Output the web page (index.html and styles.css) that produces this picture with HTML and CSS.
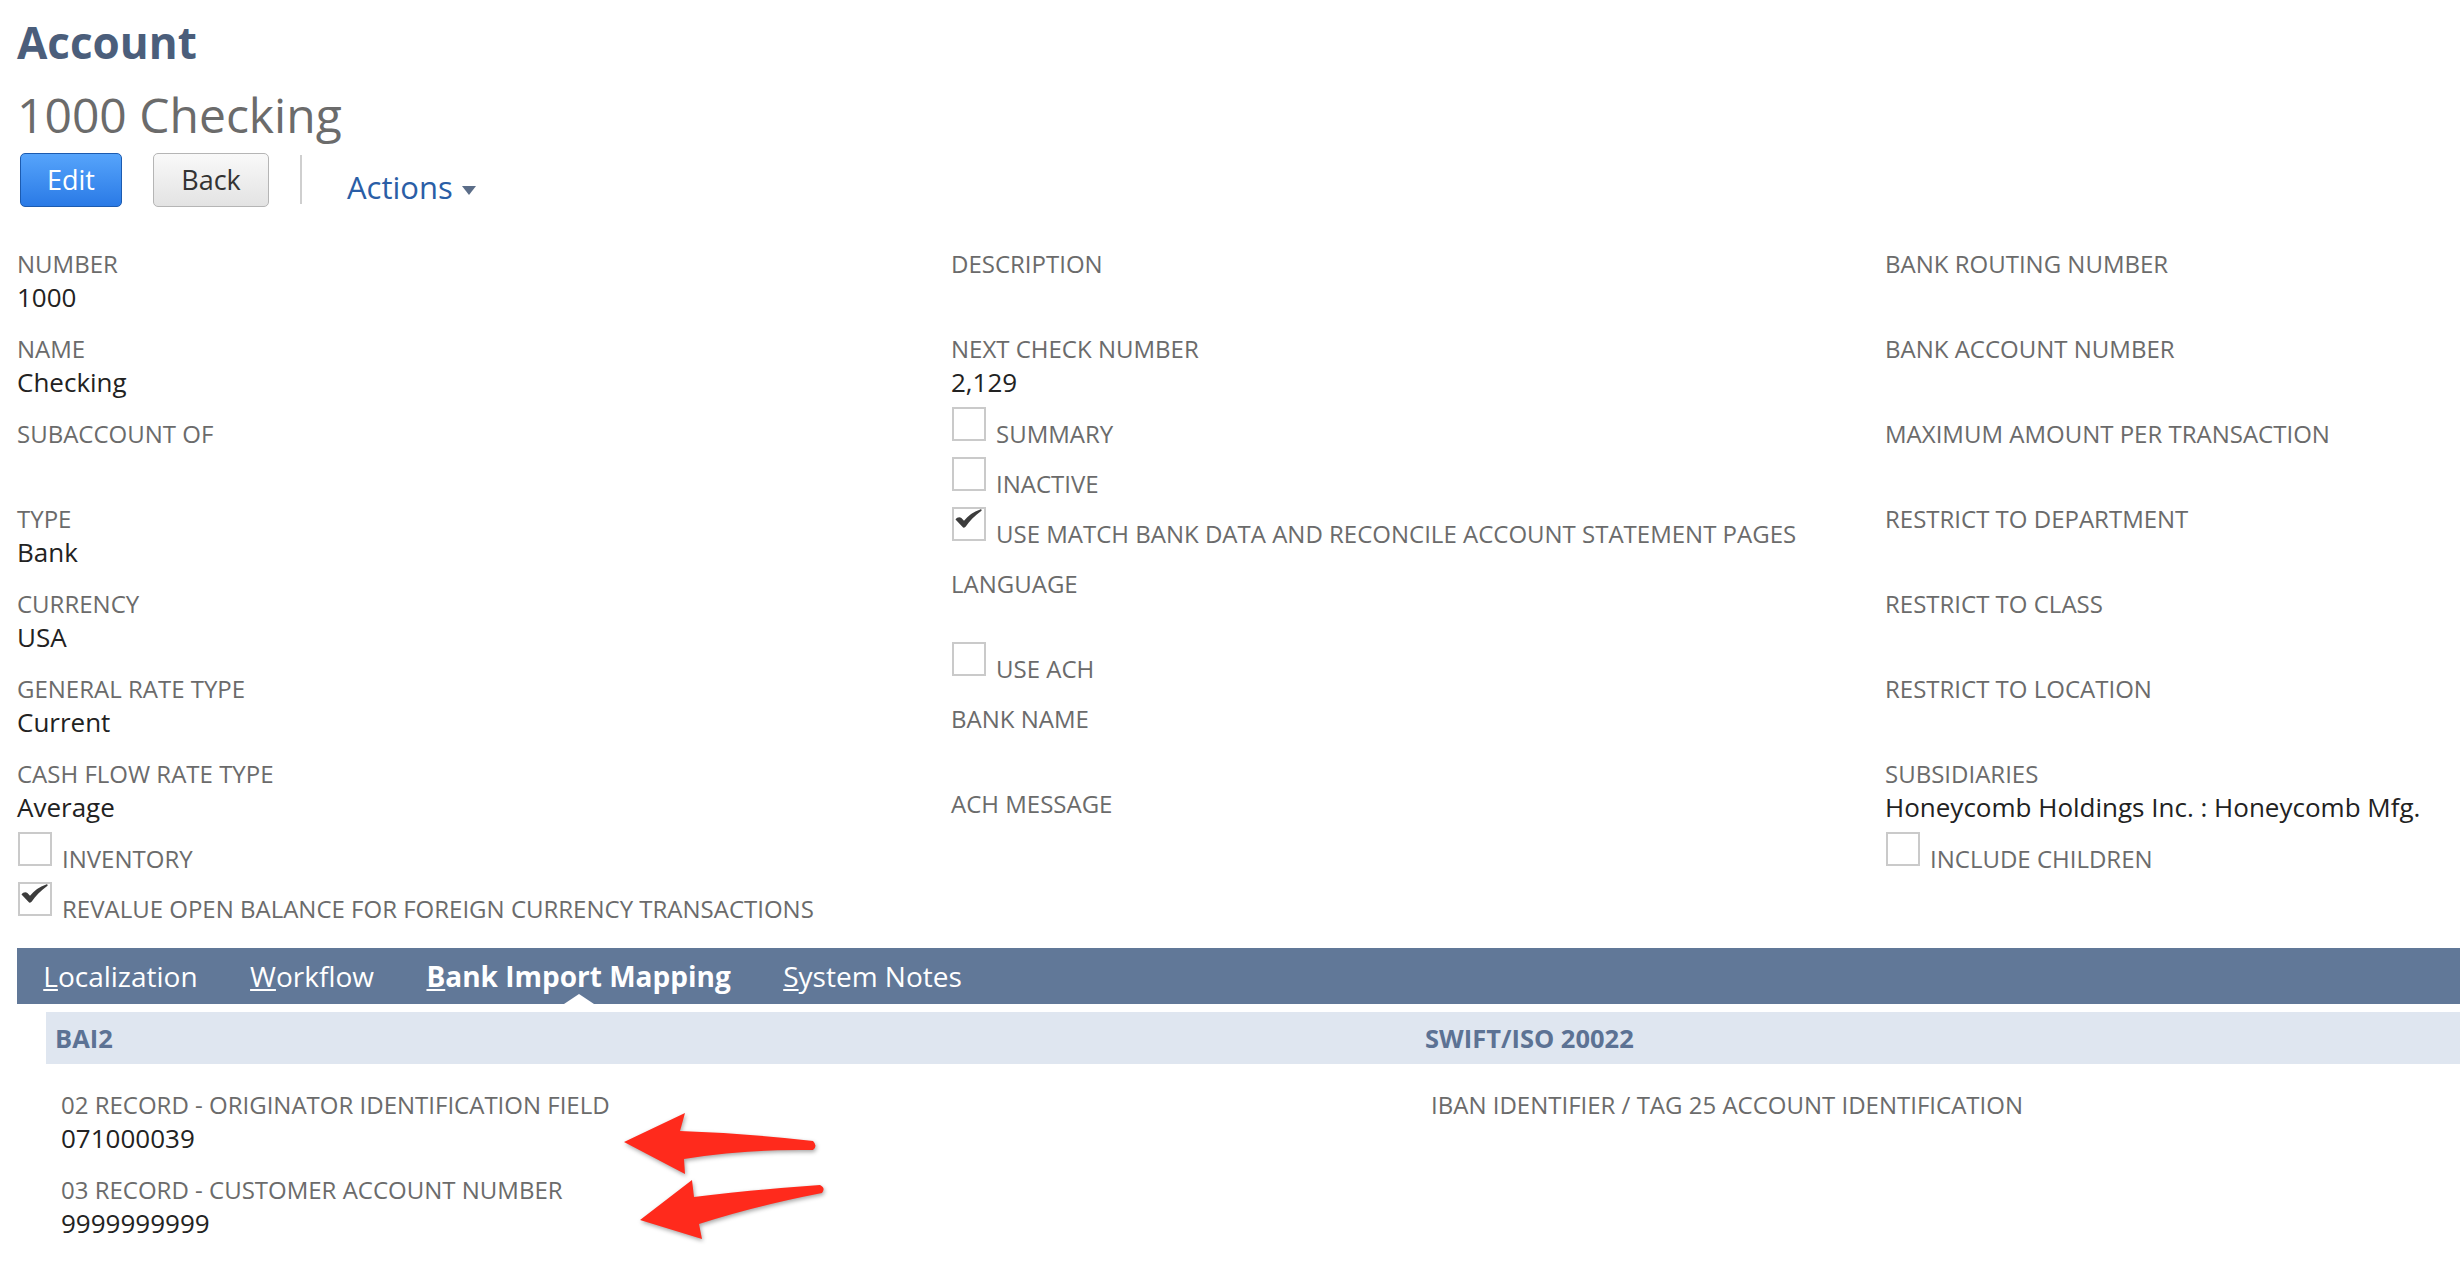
FILE: index.html
```html
<!DOCTYPE html>
<html lang="en">
<head>
<meta charset="utf-8">
<title>Account - 1000 Checking</title>
<link rel="stylesheet" href="styles.css">
</head>
<body>
<div class="page">
  <header class="head">
    <h1 class="rec-type">Account</h1>
    <h2 class="rec-name">1000 Checking</h2>
    <div class="toolbar">
      <button class="btn btn-primary">Edit</button>
      <button class="btn btn-secondary">Back</button>
      <span class="tb-divider"></span>
      <span class="actions">Actions<svg class="caret" width="14" height="9" viewBox="0 0 14 9"><path d="M0 0H14L7 9Z" fill="#5b6d88"/></svg></span>
    </div>
  </header>

  <section class="main-fields">
    <div class="col">
      <div class="field"><div class="label">Number</div><div class="value">1000</div></div>
      <div class="field"><div class="label">Name</div><div class="value">Checking</div></div>
      <div class="field"><div class="label">Subaccount of</div><div class="value"></div></div>
      <div class="field"><div class="label">Type</div><div class="value">Bank</div></div>
      <div class="field"><div class="label">Currency</div><div class="value">USA</div></div>
      <div class="field"><div class="label">General Rate Type</div><div class="value">Current</div></div>
      <div class="field"><div class="label">Cash Flow Rate Type</div><div class="value">Average</div></div>
      <div class="check-row"><span class="box"></span><span class="label">Inventory</span></div>
      <div class="check-row"><span class="box"><svg class="tick" width="30" height="30" viewBox="0 0 30 30"><path d="M1.5 10.5 C3 8.2 5.6 7.4 7.4 9 L10 11.8 C14 6.5 19.5 2.4 26.2 0.4 C27.6 0.1 28.2 1.3 27.2 2 C20.5 6.8 15.5 12 11.8 17.6 C10.8 19 9.2 19 8.4 17.8 Z" fill="#3c3c3c"/></svg></span><span class="label">Revalue open balance for foreign currency transactions</span></div>
    </div>
    <div class="col">
      <div class="field"><div class="label">Description</div><div class="value"></div></div>
      <div class="field"><div class="label">Next Check Number</div><div class="value">2,129</div></div>
      <div class="check-row"><span class="box"></span><span class="label">Summary</span></div>
      <div class="check-row"><span class="box"></span><span class="label">Inactive</span></div>
      <div class="check-row"><span class="box"><svg class="tick" width="30" height="30" viewBox="0 0 30 30"><path d="M1.5 10.5 C3 8.2 5.6 7.4 7.4 9 L10 11.8 C14 6.5 19.5 2.4 26.2 0.4 C27.6 0.1 28.2 1.3 27.2 2 C20.5 6.8 15.5 12 11.8 17.6 C10.8 19 9.2 19 8.4 17.8 Z" fill="#3c3c3c"/></svg></span><span class="label">Use Match Bank Data and Reconcile Account Statement pages</span></div>
      <div class="field"><div class="label">Language</div><div class="value"></div></div>
      <div class="check-row"><span class="box"></span><span class="label">Use ACH</span></div>
      <div class="field"><div class="label">Bank Name</div><div class="value"></div></div>
      <div class="field"><div class="label">ACH Message</div><div class="value"></div></div>
    </div>
    <div class="col">
      <div class="field"><div class="label">Bank Routing Number</div><div class="value"></div></div>
      <div class="field"><div class="label">Bank Account Number</div><div class="value"></div></div>
      <div class="field"><div class="label">Maximum Amount per Transaction</div><div class="value"></div></div>
      <div class="field"><div class="label">Restrict to Department</div><div class="value"></div></div>
      <div class="field"><div class="label">Restrict to Class</div><div class="value"></div></div>
      <div class="field"><div class="label">Restrict to Location</div><div class="value"></div></div>
      <div class="field"><div class="label">Subsidiaries</div><div class="value">Honeycomb Holdings Inc. : Honeycomb Mfg.</div></div>
      <div class="check-row"><span class="box"></span><span class="label">Include Children</span></div>
    </div>
  </section>

  <nav class="tabs">
    <span class="tab"><u>L</u>ocalization</span>
    <span class="tab"><u>W</u>orkflow</span>
    <span class="tab active"><u>B</u>ank Import Mapping</span>
    <span class="tab"><u>S</u>ystem Notes</span>
  </nav>

  <section class="subtab">
    <div class="band">
      <div class="band-cell">BAI2</div>
      <div class="band-cell">SWIFT/ISO 20022</div>
    </div>
    <div class="sub-cols">
      <div class="sub-col">
        <div class="field"><div class="label">02 Record - Originator Identification Field</div><div class="value">071000039</div></div>
        <div class="field"><div class="label">03 Record - Customer Account Number</div><div class="value">9999999999</div></div>
      </div>
      <div class="sub-col">
        <div class="field"><div class="label">IBAN Identifier / Tag 25 Account Identification</div><div class="value"></div></div>
      </div>
    </div>
  </section>

  <svg class="annot" width="240" height="150" viewBox="600 1100 240 150">
    <path d="M624 1142 L685 1113 L680 1131 Q745 1133 813 1141 Q818 1146 813 1150 Q745 1149 684 1159 L685 1174 Z" fill="#ff2a1c"/>
    <path d="M640 1220 L692 1180 L694 1197 Q750 1190 820 1185 Q826 1188 822 1193 Q755 1206 699 1224 L702 1239 Z" fill="#ff2a1c"/>
  </svg>
</div>
</body>
</html>
```

FILE: styles.css
```css
html, body {
  margin: 0;
  padding: 0;
  overflow: hidden;
  background: #ffffff;
}

body {
  font-family: "Open Sans", "Liberation Sans", sans-serif;
  color: #222222;
}

.page {
  position: relative;
  width: 2802px;
  padding: 17px 0 0 17px;
}

/* ---------- header ---------- */
.rec-type {
  margin: 0;
  font-size: 44px;
  font-weight: 700;
  line-height: 50px;
  color: #4b5e7b;
}

.rec-name {
  margin: 20px 0 0;
  font-size: 48px;
  font-weight: 400;
  line-height: 56px;
  color: #6b6b6b;
}

.toolbar {
  display: flex;
  align-items: flex-start;
  height: 54px;
  margin-top: 10px;
}

.btn {
  box-sizing: border-box;
  height: 54px;
  padding: 0;
  border-radius: 5px;
  font-family: inherit;
  font-size: 27px;
  line-height: 52px;
  text-align: center;
}

.btn-primary {
  width: 102px;
  margin-left: 3px;
  border: 1px solid #1c5bb0;
  background: linear-gradient(#56a4fb, #2a7ae6);
  color: #ffffff;
}

.btn-secondary {
  width: 116px;
  margin-left: 31px;
  border: 1px solid #b5b5b5;
  background: linear-gradient(#f9f9f9, #e3e3e3);
  color: #333333;
}

.tb-divider {
  width: 2px;
  height: 49px;
  margin: 2px 0 0 31px;
  background: #cfcfcf;
}

.actions {
  display: flex;
  align-items: center;
  margin-left: 45px;
  padding-top: 14px;
  font-size: 31px;
  line-height: 40px;
  color: #2a5ea6;
}

.caret {
  margin: 6px 0 0 9px;
}

/* ---------- main fields ---------- */
.main-fields {
  display: grid;
  grid-template-columns: repeat(3, 934px);
  margin-top: 40px;
}

.field {
  padding-bottom: 18px;
}

.label {
  font-size: 24px;
  line-height: 33px;
  color: #6b6b6b;
  text-transform: uppercase;
  white-space: nowrap;
}

.value {
  height: 34px;
  font-size: 26px;
  line-height: 34px;
  color: #222222;
  white-space: nowrap;
}

.check-row {
  display: flex;
  align-items: flex-start;
  height: 50px;
  margin: -10px 0 10px;
}

.check-row .label {
  margin-top: 9.5px;
}

.box {
  flex: none;
  box-sizing: border-box;
  width: 34px;
  height: 34px;
  margin: 0 10px 0 1px;
  border: 2px solid #cacaca;
  background: #ffffff;
}

.tick {
  display: block;
}

/* ---------- tabs ---------- */
.tabs {
  display: flex;
  height: 56px;
  margin-top: 6px;
  background: #617898;
}

.tab {
  position: relative;
  padding: 0 26.25px;
  font-size: 28px;
  line-height: 56px;
  color: #ffffff;
  white-space: nowrap;
}

.tab.active {
  font-weight: 700;
}

.tab.active::after {
  content: "";
  position: absolute;
  bottom: 0;
  left: 50%;
  margin-left: -15px;
  border-left: 15px solid transparent;
  border-right: 15px solid transparent;
  border-bottom: 10px solid #ffffff;
}

/* ---------- sub tab ---------- */
.subtab {
  margin: 8px 0 0 29px;
}

.band {
  display: grid;
  grid-template-columns: 1370px 1370px;
  height: 52px;
  background: #dfe6f0;
}

.band-cell {
  padding-left: 9px;
  font-size: 25.5px;
  font-weight: 700;
  line-height: 52px;
  color: #5c7294;
}

.sub-cols {
  display: grid;
  grid-template-columns: 1370px 1370px;
  padding-top: 24px;
}

.sub-col {
  padding-left: 15px;
}

/* ---------- annotation arrows ---------- */
.annot {
  position: absolute;
  left: 600px;
  top: 1100px;
  filter: drop-shadow(1px 2px 2px rgba(0, 0, 0, 0.35));
}
```
